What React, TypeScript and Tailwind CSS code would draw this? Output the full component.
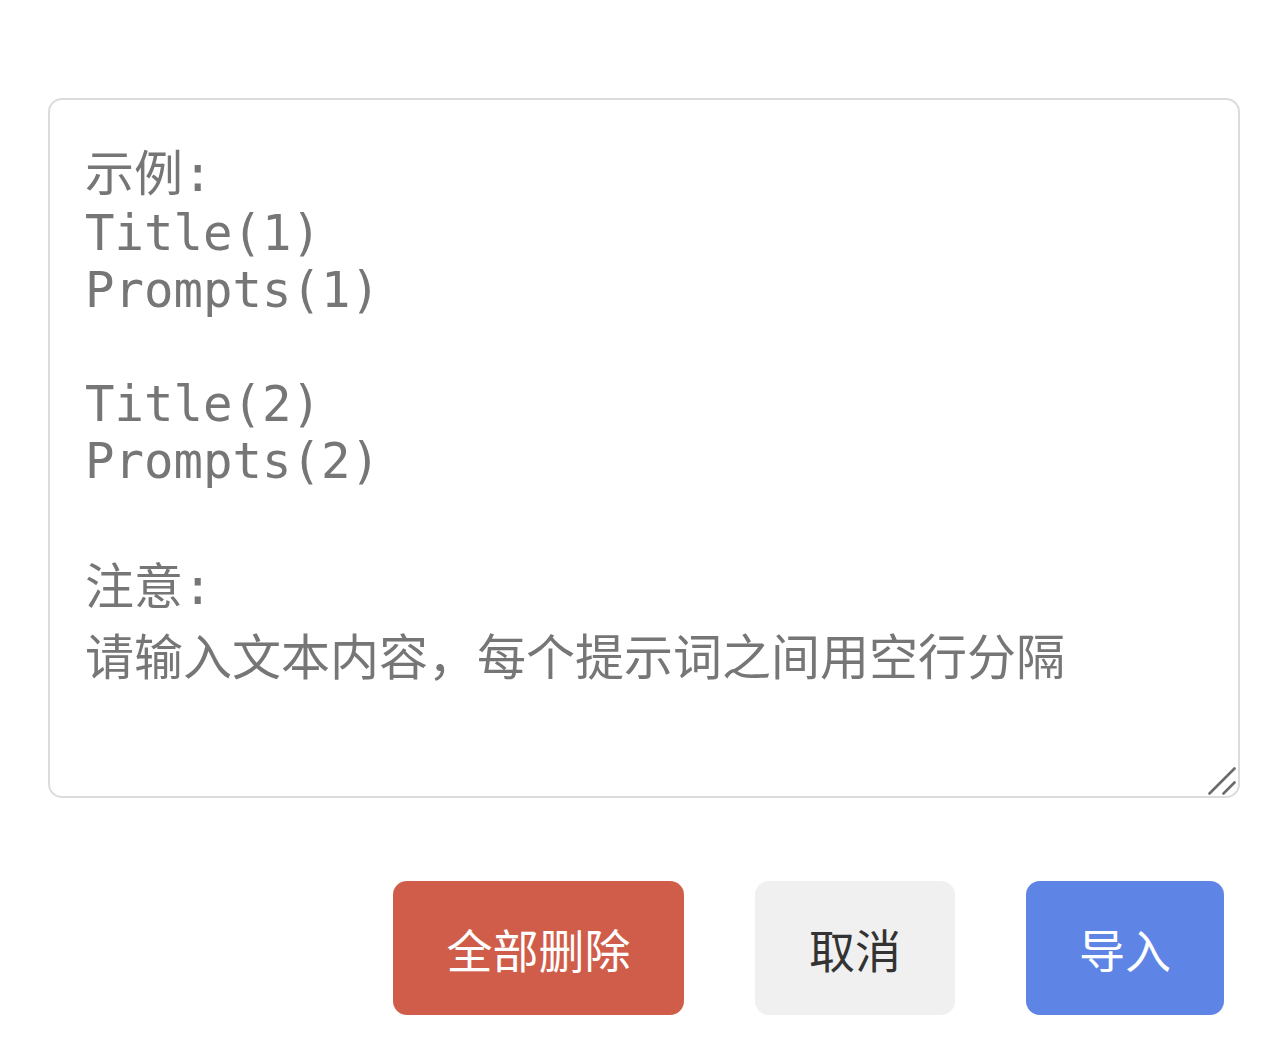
import { useState } from 'react';

const placeholder = `示例:
Title(1)
Prompts(1)

Title(2)
Prompts(2)

注意:
请输入文本内容，每个提示词之间用空行分隔`;

export default function App() {
    const [text, setText] = useState('');

    return (
        <div className="min-h-screen w-full bg-white pt-[98px] pl-[48px]">
            {/* Import box */}
            <div className="relative w-[1192px]">
                <textarea
                    value={text}
                    onChange={(e) => setText(e.target.value)}
                    placeholder={placeholder}
                    className="block w-full h-[700px] resize-none rounded-[14px] border-2 border-[#dcdcdc] bg-white pt-[34px] px-[35px] text-[49px] leading-[normal] text-[#333] placeholder:text-[#767676] outline-none font-['DejaVu_Sans_Mono','Noto_Sans_CJK_SC',monospace]"
                />
                {/* resize grip */}
                <svg className="pointer-events-none absolute right-[4px] bottom-[3px]" width="28" height="28" viewBox="0 0 28 28">
                    <path d="M1.5 26.5 L26.5 1.5 M15.5 26.5 L26.5 15.5" stroke="#6b6b6b" strokeWidth="2.6" strokeLinecap="round" fill="none" />
                </svg>
            </div>

            {/* Actions */}
            <div className="mt-[83px] flex w-[1176px] justify-end gap-[71px] font-['Noto_Sans_CJK_SC',sans-serif] text-[46px]">
                <button className="h-[134px] w-[291px] rounded-[14px] bg-[#d05d4a] text-white">全部删除</button>
                <button className="h-[134px] w-[200px] rounded-[14px] bg-[#f0f0f0] text-[#333]">取消</button>
                <button className="h-[134px] w-[198px] rounded-[14px] bg-[#5e84e6] text-white">导入</button>
            </div>
        </div>
    );
}
